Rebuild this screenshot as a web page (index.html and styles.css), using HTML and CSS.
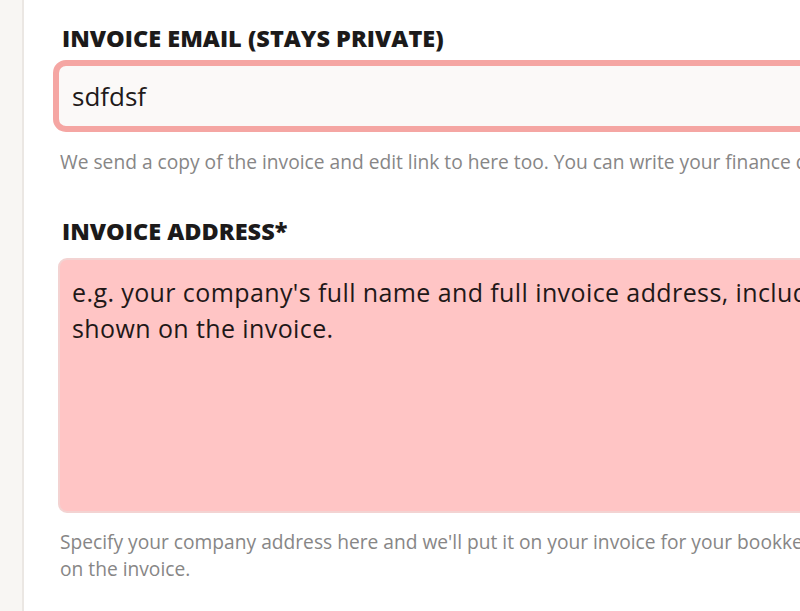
FILE: index.html
```html
<!DOCTYPE html>
<html lang="en">
<head>
<meta charset="utf-8">
<title>Invoice details</title>
<link rel="stylesheet" href="styles.css">
</head>
<body>
<div class="page">
  <aside class="sidebar"></aside>
  <main class="main">
    <div class="field">
      <label class="label" for="email">INVOICE EMAIL (STAYS PRIVATE)</label>
      <input class="input" id="email" type="text" value="sdfdsf">
      <p class="help">We send a copy of the invoice and edit link to here too. You can write your finance department's email here.</p>
    </div>
    <div class="field field-address">
      <label class="label" for="address">INVOICE ADDRESS*</label>
      <textarea class="textarea" id="address" placeholder="e.g. your company's full name and full invoice address, including your VAT number if you want it&#10;shown on the invoice."></textarea>
      <p class="help">Specify your company address here and we'll put it on your invoice for your bookkeeping. Be sure to include your VAT number if you want it shown<br>on the invoice.</p>
    </div>
  </main>
</div>
</body>
</html>
```

FILE: styles.css
```css
* { box-sizing: border-box; }
html, body { margin: 0; padding: 0; background: #ffffff; }
body { font-family: "Open Sans", "Noto Sans", sans-serif; }
.page { display: flex; width: 800px; height: 611px; overflow: hidden; }
.sidebar { flex: 0 0 24px; background: #f8f6f3; border-right: 2px solid #ebe7e3; }
.main { flex: 1; min-width: 0; padding: 23px 0 0 34px; }
.field { width: 1500px; }
.label {
  display: block;
  font-size: 23.5px;
  font-weight: 800;
  color: #1c1a1a;
  line-height: 30px;
  margin: 0 0 7px 4px;
}
.input {
  display: block;
  width: 100%;
  height: 72px;
  margin-left: -5px;
  border: 6px solid #f5a6a3;
  border-radius: 13px;
  background: #fbf9f8;
  padding: 0 0 0 13px;
  font-family: "Open Sans", "Noto Sans", sans-serif;
  font-size: 26px;
  color: #1f1a1a;
  outline: none;
}
.help {
  margin: 16px 0 0 2px;
  font-size: 19.2px;
  line-height: 27px;
  color: #878686;
  white-space: nowrap;
}
.field-address { margin-top: 41px; }
.field-address .label { margin-bottom: 12px; }
.textarea {
  display: block;
  width: 100%;
  height: 255px;
  border: 2px solid #f3d3d2;
  border-radius: 9px;
  background: #ffc5c5;
  padding: 14px 12px;
  font-family: "Open Sans", "Noto Sans", sans-serif;
  font-size: 25px;
  letter-spacing: 0.4px;
  line-height: 36px;
  color: #1f1818;
  resize: none;
  outline: none;
  white-space: pre;
}
.textarea::placeholder { color: #1f1818; opacity: 1; }
.field-address .help { margin-top: 15px; }
```
